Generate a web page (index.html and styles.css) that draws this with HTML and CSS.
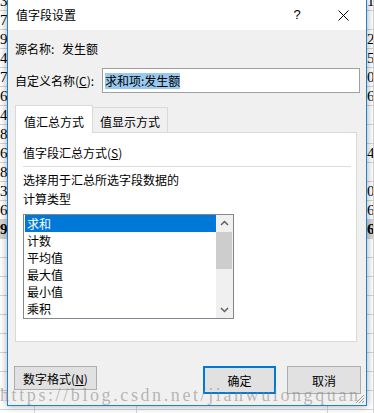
FILE: index.html
```html
<!DOCTYPE html>
<html>

<head>
  <meta charset="UTF-8" />
  <title>值字段设置</title>
  <link rel="stylesheet" href="styles.css">
</head>

<body>
  <!-- spreadsheet behind the dialog -->
  <div class="sheet">
    <div class="row"><span class="c1">3</span><span class="c2"></span><span class="c3"></span><span class="c4">1</span></div>
    <div class="row"><span class="c1">7</span><span class="c2"></span><span class="c3"></span><span class="c4"></span></div>
    <div class="row"><span class="c1">9</span><span class="c2"></span><span class="c3"></span><span class="c4">2</span></div>
    <div class="row"><span class="c1">4</span><span class="c2"></span><span class="c3"></span><span class="c4">5</span></div>
    <div class="row"><span class="c1">7</span><span class="c2"></span><span class="c3"></span><span class="c4">0</span></div>
    <div class="row"><span class="c1">6</span><span class="c2"></span><span class="c3"></span><span class="c4">6</span></div>
    <div class="row"><span class="c1">4</span><span class="c2"></span><span class="c3"></span><span class="c4"></span></div>
    <div class="row"><span class="c1">8</span><span class="c2"></span><span class="c3"></span><span class="c4"></span></div>
    <div class="row"><span class="c1">6</span><span class="c2"></span><span class="c3"></span><span class="c4">4</span></div>
    <div class="row"><span class="c1">8</span><span class="c2"></span><span class="c3"></span><span class="c4"></span></div>
    <div class="row"><span class="c1">3</span><span class="c2"></span><span class="c3"></span><span class="c4">0</span></div>
    <div class="row"><span class="c1">6</span><span class="c2"></span><span class="c3"></span><span class="c4">6</span></div>
    <div class="row current"><span class="c1">9.</span><span class="c2"></span><span class="c3"></span><span class="c4">6</span></div>
    <div class="row"><span class="c1"></span><span class="c2"></span><span class="c3"></span><span class="c4"></span></div>
    <div class="row"><span class="c1"></span><span class="c2"></span><span class="c3"></span><span class="c4"></span></div>
    <div class="row"><span class="c1"></span><span class="c2"></span><span class="c3"></span><span class="c4"></span></div>
    <div class="row"><span class="c1"></span><span class="c2"></span><span class="c3"></span><span class="c4"></span></div>
    <div class="row"><span class="c1"></span><span class="c2"></span><span class="c3"></span><span class="c4"></span></div>
    <div class="row"><span class="c1"></span><span class="c2"></span><span class="c3"></span><span class="c4"></span></div>
    <div class="row"><span class="c1"></span><span class="c2"></span><span class="c3"></span><span class="c4"></span></div>
    <div class="row"><span class="c1"></span><span class="c2"></span><span class="c3"></span><span class="c4"></span></div>
    <div class="row"><span class="c1"></span><span class="c2"></span><span class="c3"></span><span class="c4"></span></div>
    <div class="row"><span class="c1"></span><span class="c2"></span><span class="c3"></span><span class="c4"></span></div>
  </div>

  <div class="dialog">
    <div class="titlebar">
      <span class="title">值字段设置</span>
      <span class="tb-btn">?</span>
      <span class="tb-btn">
        <svg width="11" height="11" viewBox="0 0 11 11"><path d="M0.5 0.5L10.5 10.5M10.5 0.5L0.5 10.5" stroke="#000" stroke-width="1" fill="none"/></svg>
      </span>
    </div>

    <div class="dlg-body">
      <div class="src-row"><span class="src-label">源名称:</span>发生额</div>

      <div class="name-row">
        <span class="name-label">自定义名称(<u>C</u>):</span>
        <div class="textbox"><span class="sel">求和项:发生额</span></div>
      </div>

      <div class="tabs">
        <div class="tab active">值汇总方式</div>
        <div class="tab">值显示方式</div>
      </div>

      <div class="panel">
        <div class="group-title">值字段汇总方式(<u>S</u>)</div>
        <div class="sep"></div>
        <div class="hint">选择用于汇总所选字段数据的</div>
        <div class="hint2">计算类型</div>

        <div class="listbox">
          <div class="items">
            <div class="item selected">求和</div>
            <div class="item">计数</div>
            <div class="item">平均值</div>
            <div class="item">最大值</div>
            <div class="item">最小值</div>
            <div class="item">乘积</div>
          </div>
          <div class="vscroll">
            <svg class="arrow" width="17" height="17" viewBox="0 0 17 17"><path d="M5 10L8.5 6.5L12 10" stroke="#606060" stroke-width="1.5" fill="none"/></svg>
            <div class="thumb"></div>
            <div class="track"></div>
            <svg class="arrow" width="17" height="17" viewBox="0 0 17 17"><path d="M5 7L8.5 10.5L12 7" stroke="#606060" stroke-width="1.5" fill="none"/></svg>
          </div>
        </div>
      </div>

      <div class="buttons">
        <button class="btn fmt">数字格式(<u>N</u>)</button>
        <span class="spacer"></span>
        <button class="btn ok">确定</button>
        <button class="btn">取消</button>
      </div>
    </div>

    <svg class="grip" width="10" height="10" viewBox="0 0 10 10"><path d="M9 1L1 9M9 4L4 9M9 7L7 9" stroke="#a0a0a0" stroke-width="1" fill="none"/></svg>
  </div>

  <div class="watermark">https://blog.csdn.net/jianwulongquan</div>
</body>

</html>
```

FILE: styles.css
```css
/* Reset */
* {
  margin: 0;
  padding: 0;
  box-sizing: border-box;
}

body {
  width: 374px;
  height: 413px;
  overflow: hidden;
  position: relative;
  background-color: #fff;
  font-family: "Noto Sans CJK SC", "Microsoft YaHei", sans-serif;
  font-size: 12px;
  color: #000;
}

u {
  text-decoration: underline;
  text-underline-offset: 1px;
}

/* Spreadsheet behind */
.sheet {
  margin-top: -8px;
  font-family: "Liberation Serif", serif;
  font-size: 15px;
}

.row {
  display: flex;
  height: 19px;
  line-height: 18px;
  border-bottom: 1px solid #d4d4d4;
}

.row span {
  border-right: 1px solid #d4d4d4;
  overflow: hidden;
  white-space: nowrap;
}

.c1 {
  width: 35px;
}

.c2 {
  width: 102px;
}

.c3 {
  width: 191px;
}

.c4 {
  width: 46px;
  padding-left: 39px;
}

.row.current .c1,
.row.current .c4 {
  background-color: #d6d6d6;
  font-weight: bold;
}

/* Dialog */
.dialog {
  position: absolute;
  left: 7px;
  top: -1px;
  width: 360px;
  height: 407px;
  border: 1px solid #1883d7;
  background-color: #f0f0f0;
  box-shadow: 0 0 8px rgba(0, 0, 0, 0.35);
  display: flex;
  flex-direction: column;
}

.titlebar {
  display: flex;
  height: 30px;
  background-color: #fff;
  line-height: 30px;
}

.title {
  flex: 1;
  padding-left: 8px;
}

.tb-btn {
  width: 46px;
  display: flex;
  align-items: center;
  justify-content: center;
  font-family: "Liberation Sans", sans-serif;
  font-size: 13px;
}

.dlg-body {
  flex: 1;
  padding: 0 5px 0 7px;
  display: flex;
  flex-direction: column;
}

.src-row {
  margin-top: 11px;
  line-height: 16px;
}

.src-label {
  display: inline-block;
  width: 47px;
}

.name-row {
  margin-top: 11px;
  display: flex;
  align-items: center;
  height: 25px;
}

.name-label {
  width: 87px;
}

.textbox {
  width: 258px;
  height: 25px;
  border: 1px solid #a0a0a0;
  background-color: #fff;
  padding: 3px 0 0 2px;
}

.sel {
  display: inline-block;
  background-color: #99c9ef;
  line-height: 16px;
}

/* Tabs */
.tabs {
  margin-top: 12px;
  display: flex;
  align-items: flex-end;
  height: 27px;
  position: relative;
  z-index: 1;
}

.tab {
  width: 75px;
  height: 25px;
  padding: 6px 0 0 7px;
  line-height: 16px;
  border: 1px solid #d9d9d9;
  border-left: none;
  border-bottom: none;
}

.tab.active {
  width: 78px;
  height: 28px;
  padding: 8px 0 0 8px;
  margin-bottom: -1px;
  background-color: #fff;
  border-left: 1px solid #d9d9d9;
}

.panel {
  width: 342px;
  height: 210px;
  border: 1px solid #d9d9d9;
  background-color: #fff;
  padding: 0 7px;
}

.group-title {
  margin-top: 12px;
  line-height: 16px;
}

.sep {
  margin-top: 5px;
  width: 328px;
  height: 1px;
  background-color: #dcdcdc;
}

.hint {
  margin-top: 5px;
  line-height: 16px;
}

.hint2 {
  margin-top: 3px;
  line-height: 16px;
}

/* List box */
.listbox {
  margin-top: 7px;
  width: 211px;
  height: 105px;
  border: 1px solid #828790;
  display: flex;
  overflow: hidden;
}

.items {
  flex: 1;
  padding-left: 1px;
}

.item {
  height: 17px;
  line-height: 17px;
  padding-left: 2px;
}

.item.selected {
  background-color: #0078d7;
  color: #fff;
}

.vscroll {
  width: 17px;
  background-color: #f0f0f0;
  display: flex;
  flex-direction: column;
}

.thumb {
  height: 37px;
  margin: 0 1px 0 0;
  background-color: #cdcdcd;
}

.track {
  flex: 1;
}

/* Buttons */
.buttons {
  margin-top: 24px;
  display: flex;
  align-items: flex-start;
}

.btn {
  height: 28px;
  width: 74px;
  background-color: #e1e1e1;
  border: 1px solid #adadad;
  font-family: inherit;
  font-size: 12px;
  color: #000;
  margin-left: 11px;
}

.btn.fmt {
  width: 83px;
  height: 24px;
  margin-left: -1px;
}

.btn.ok {
  width: 73px;
  border: 2px solid #0078d7;
}

.spacer {
  flex: 1;
}

.grip {
  position: absolute;
  right: 1px;
  bottom: 1px;
}

/* Watermark over the image */
.watermark {
  position: absolute;
  left: 0;
  top: 385px;
  font-family: "Liberation Serif", serif;
  font-size: 18px;
  line-height: 20px;
  letter-spacing: 2.6px;
  color: rgba(130, 130, 130, 0.55);
  white-space: nowrap;
  pointer-events: none;
}
```
